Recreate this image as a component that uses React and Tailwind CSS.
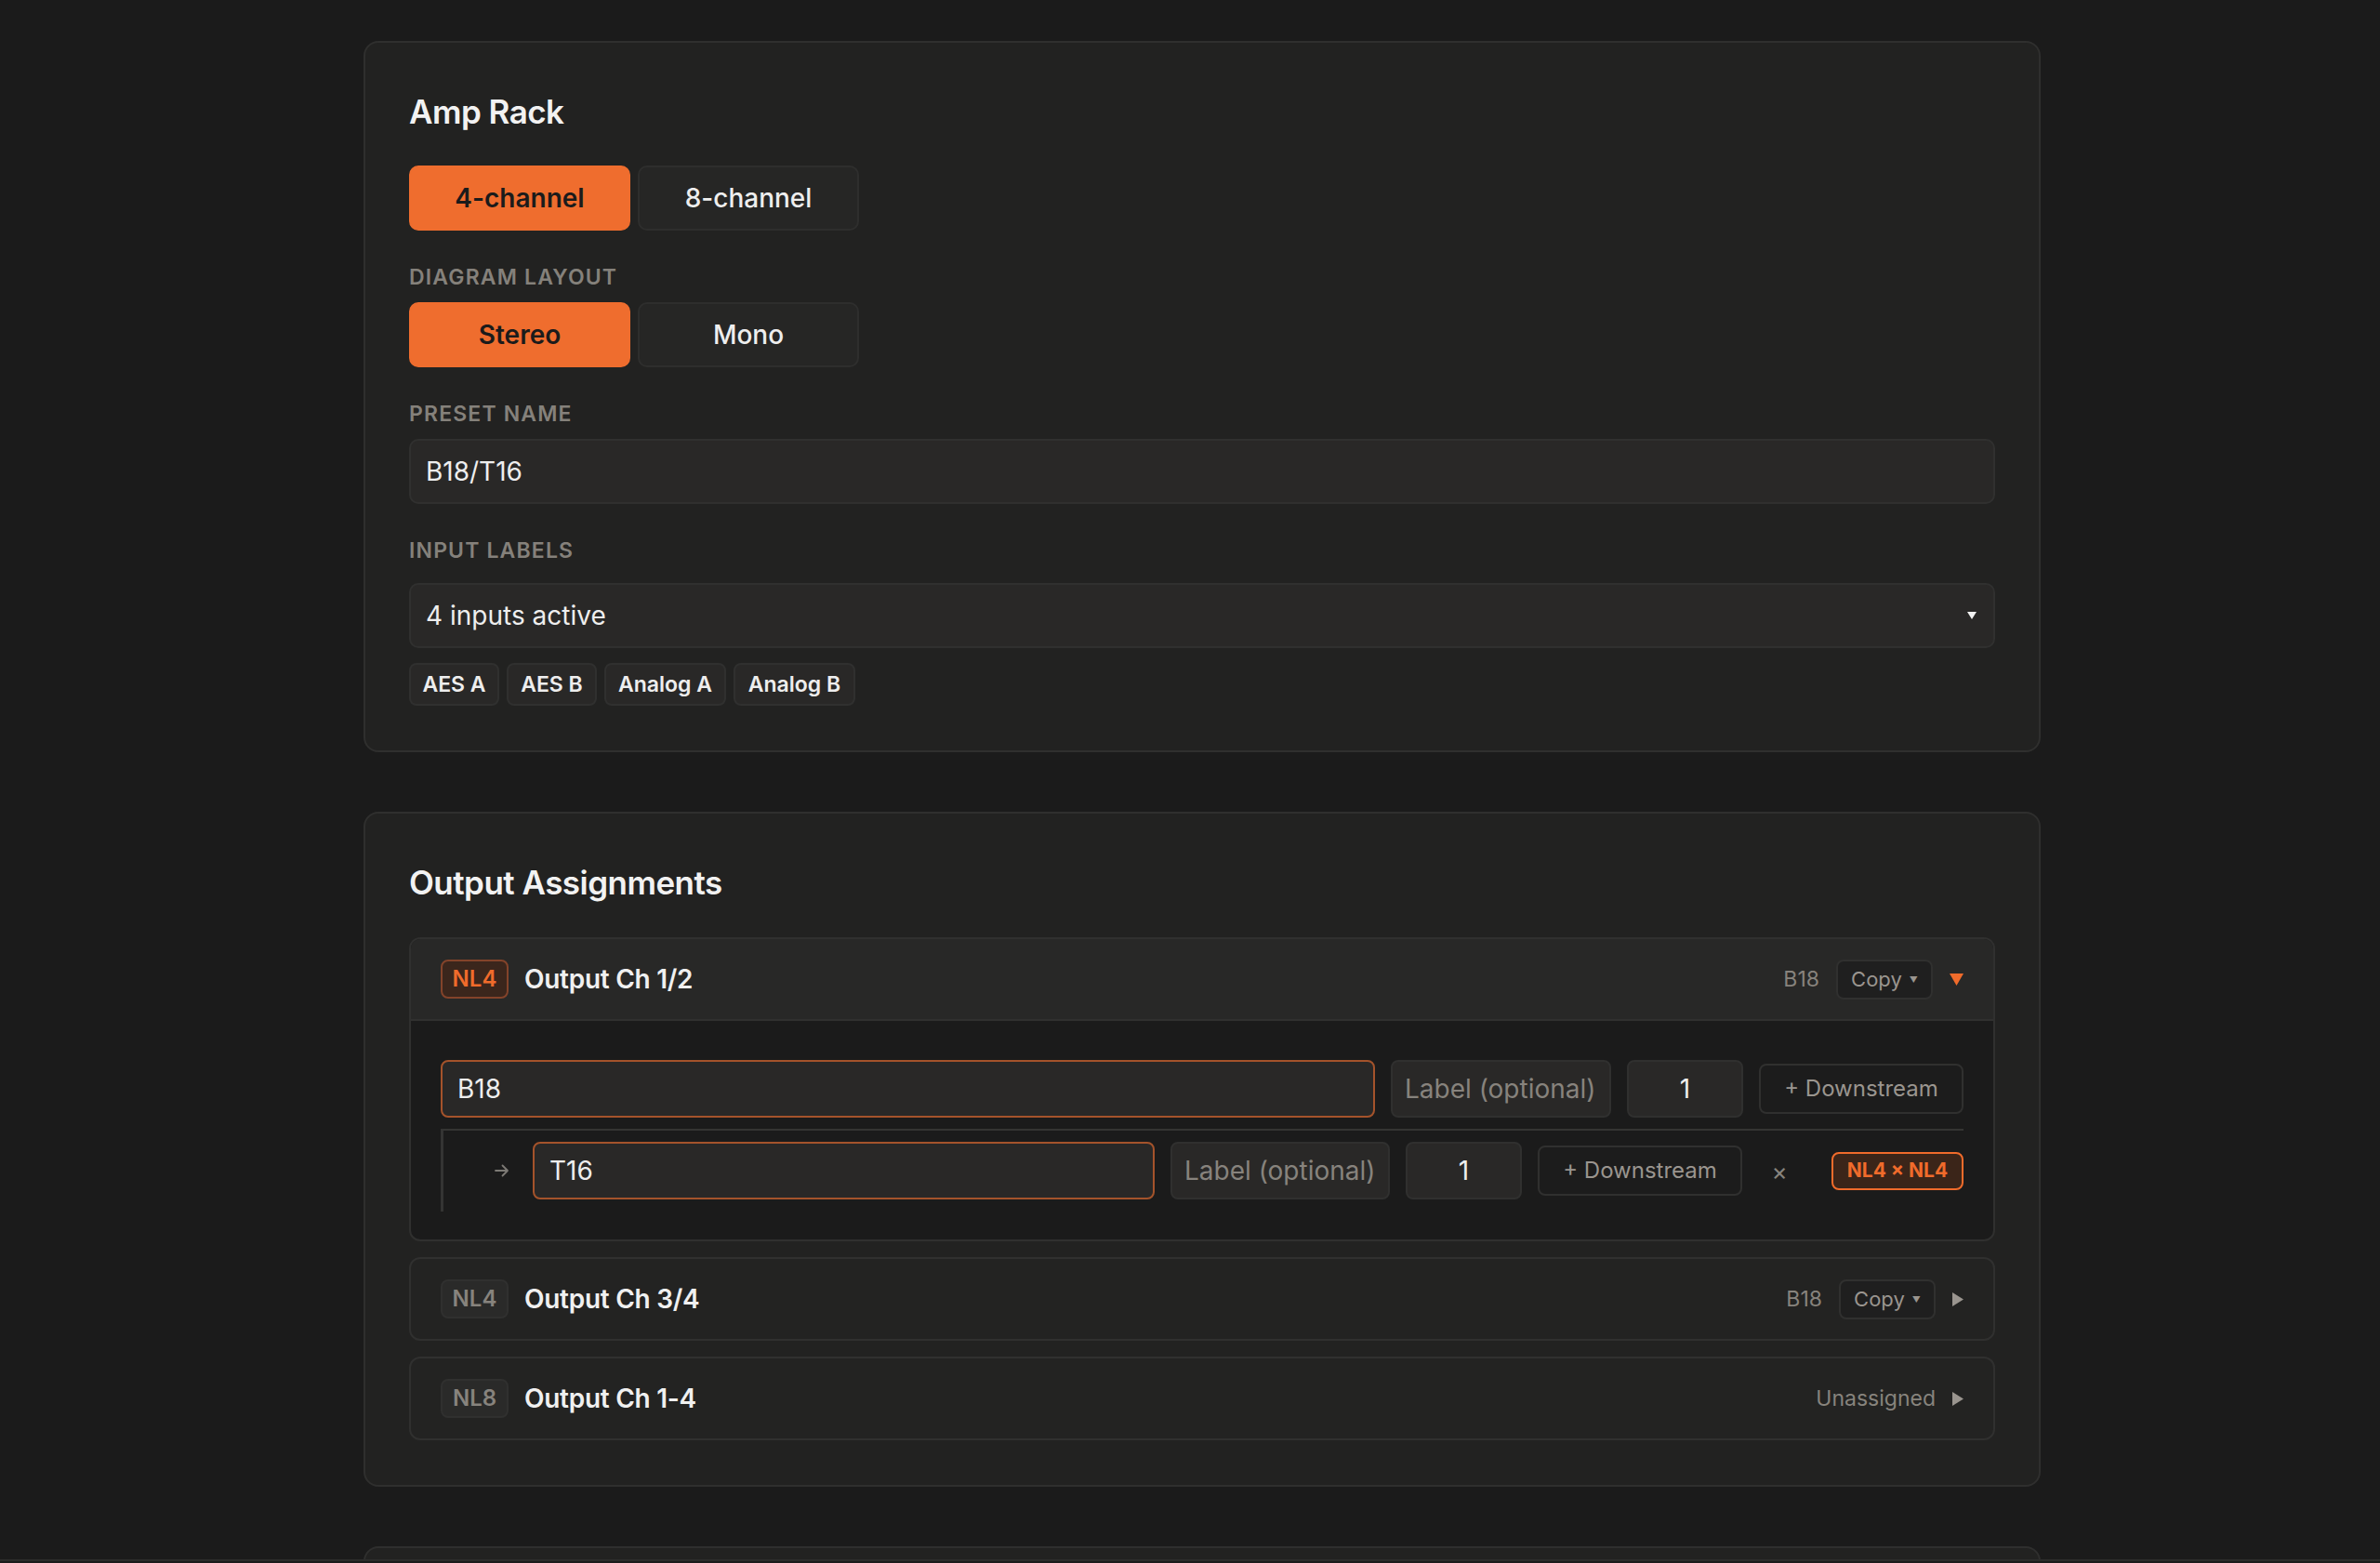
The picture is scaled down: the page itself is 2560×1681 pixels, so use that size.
import { useState } from 'react'

function SectionLabel({ children, className = '' }) {
  return (
    <div
      className={`h-[32px] text-[23px] leading-[32px] font-semibold uppercase tracking-[0.05em] text-[#85817b] ${className}`}
    >
      {children}
    </div>
  )
}

function Toggle({ options, value, onChange }) {
  return (
    <div className="flex gap-[8px]">
      {options.map((opt) => (
        <button
          key={opt}
          type="button"
          onClick={() => onChange(opt)}
          className={`h-[70px] w-[238px] rounded-[10px] border-2 text-[28px] ${
            value === opt
              ? 'border-[#ef6d2e] bg-[#ef6d2e] font-semibold text-[#1b1b1b]'
              : 'border-[#2e2e2d] bg-[#262625] font-medium text-[#eeeeee]'
          }`}
        >
          {opt}
        </button>
      ))}
    </div>
  )
}

function Caret({ open, color }) {
  return open ? (
    <svg width="15" height="13" viewBox="0 0 15 13">
      <polygon points="0,0 15,0 7.5,13" fill={color} />
    </svg>
  ) : (
    <svg width="12" height="15" viewBox="0 0 12 15">
      <polygon points="0,0 12,7.5 0,15" fill={color} />
    </svg>
  )
}

function Badge({ active, children }) {
  return (
    <span
      className={`flex h-[42px] w-[73px] items-center justify-center rounded-[8px] border-2 text-[24px] font-semibold ${
        active
          ? 'border-[#83432a] bg-[#3b261c] text-[#f06b2b]'
          : 'border-[#30302f] bg-[#2a2a29] text-[#87837d]'
      }`}
    >
      {children}
    </span>
  )
}

function CopyButton() {
  return (
    <button
      type="button"
      className="flex h-[43px] w-[104px] items-center justify-center gap-[8px] rounded-[8px] border-2 border-[#30302f] bg-[#1f1f1f] text-[22px] text-[#9a958f]"
    >
      Copy <span className="text-[9px] leading-none">▼</span>
    </button>
  )
}

function ChannelHeader({ badge, title, active, open, source, bordered }) {
  return (
    <div
      className={`flex items-center px-[32px] ${
        bordered ? 'h-[88px] border-b-2 border-[#30302f] bg-[#282827]' : 'h-[86px]'
      }`}
    >
      <div className="flex items-center gap-[17px]">
        <Badge active={active}>{badge}</Badge>
        <span className="text-[28px] font-semibold tracking-[-0.01em] text-[#f0f0f0]">{title}</span>
      </div>
      <div className="ml-auto flex items-center gap-[18px]">
        {source ? (
          <>
            <span className="text-[23px] text-[#87837d]">{source}</span>
            <CopyButton />
          </>
        ) : (
          <span className="text-[23px] text-[#87837d]">Unassigned</span>
        )}
        <Caret open={open} color={open ? '#f06b2b' : '#9a958f'} />
      </div>
    </div>
  )
}

const fieldBase =
  'h-[62px] rounded-[8px] border-2 bg-[#292827] text-[28px] text-[#eeeeee] outline-none'

function DownstreamButton() {
  return (
    <button
      type="button"
      className="h-[54px] w-[220px] shrink-0 rounded-[8px] border-2 border-[#30302f] bg-[#1c1c1c] text-[24px] text-[#9a958f]"
    >
      + Downstream
    </button>
  )
}

export default function App() {
  const [channels, setChannels] = useState('4-channel')
  const [layout, setLayout] = useState('Stereo')

  return (
    <div className="min-h-screen bg-[#1b1b1b] pb-[40px] pl-[391px] pt-[44px] font-['Inter','Noto_Sans',sans-serif]">
      <div className="flex w-[1804px] flex-col gap-[64px]">
        {/* Amp Rack */}
        <section className="rounded-[16px] border-2 border-[#2f2f2e] bg-[#222221] px-[47px] pb-[48px] pt-[52px]">
          <h2 className="h-[44px] text-[35px] leading-[44px] font-semibold tracking-[-0.015em] text-[#f2f2f2]">
            Amp Rack
          </h2>
          <div className="mt-[36px]">
            <Toggle options={['4-channel', '8-channel']} value={channels} onChange={setChannels} />
          </div>
          <SectionLabel className="mt-[34px]">Diagram Layout</SectionLabel>
          <div className="mt-[11px]">
            <Toggle options={['Stereo', 'Mono']} value={layout} onChange={setLayout} />
          </div>
          <SectionLabel className="mt-[34px]">Preset Name</SectionLabel>
          <input
            readOnly
            value="B18/T16"
            className="mt-[11px] block h-[70px] w-full rounded-[10px] border-2 border-[#30302f] bg-[#292827] px-[16px] text-[28px] text-[#eeeeee] outline-none"
          />
          <SectionLabel className="mt-[34px]">Input Labels</SectionLabel>
          <div className="mt-[19px] flex h-[70px] items-center rounded-[10px] border-2 border-[#30302f] bg-[#292827] pl-[16px] pr-[18px] text-[28px] text-[#eeeeee]">
            <span>4 inputs active</span>
            <svg className="ml-auto" width="10" height="8" viewBox="0 0 10 8">
              <polygon points="0,0 10,0 5,8" fill="#f2f2f2" />
            </svg>
          </div>
          <div className="mt-[16px] flex gap-[8px]">
            {['AES A', 'AES B', 'Analog A', 'Analog B'].map((t) => (
              <span
                key={t}
                className={`flex h-[46px] items-center justify-center rounded-[8px] border-2 border-[#30302f] bg-[#292827] text-[23px] font-semibold text-[#eeeeee] ${
                  t.startsWith('AES') ? 'w-[97px]' : 'w-[131px]'
                }`}
              >
                {t}
              </span>
            ))}
          </div>
        </section>

        {/* Output Assignments */}
        <section className="rounded-[16px] border-2 border-[#2f2f2e] bg-[#222221] px-[47px] pb-[48px] pt-[52px]">
          <h2 className="h-[44px] text-[35px] leading-[44px] font-semibold tracking-[-0.015em] text-[#f2f2f2]">
            Output Assignments
          </h2>
          <div className="mt-[37px] flex flex-col gap-[17px]">
            <div className="overflow-hidden rounded-[12px] border-2 border-[#30302f] bg-[#1b1b1b]">
              <ChannelHeader badge="NL4" title="Output Ch 1/2" active open source="B18" bordered />
              <div className="px-[32px] pb-[30px] pt-[42px]">
                <div className="flex items-center gap-[17px]">
                  <input readOnly value="B18" className={`${fieldBase} min-w-0 flex-1 border-[#a4532b] px-[16px]`} />
                  <input
                    readOnly
                    placeholder="Label (optional)"
                    className={`${fieldBase} w-[237px] border-[#30302f] px-[13px] placeholder:text-[#87837d]`}
                  />
                  <input readOnly value="1" className={`${fieldBase} w-[125px] border-[#30302f] text-center`} />
                  <DownstreamButton />
                </div>
                <div className="mt-[12px] flex items-center border-l-[3px] border-t-2 border-[#343433] pb-[13px] pl-[55px] pt-[12px]">
                  <svg width="16" height="14" viewBox="0 0 16 14" className="shrink-0">
                    <path d="M1 7h13M8.5 1.5 14 7l-5.5 5.5" fill="none" stroke="#7d7a75" strokeWidth="1.8" strokeLinecap="round" strokeLinejoin="round" />
                  </svg>
                  <input readOnly value="T16" className={`${fieldBase} ml-[25px] min-w-0 flex-1 border-[#a4532b] px-[16px]`} />
                  <input
                    readOnly
                    placeholder="Label (optional)"
                    className={`${fieldBase} ml-[17px] w-[236px] border-[#30302f] px-[13px] placeholder:text-[#87837d]`}
                  />
                  <input readOnly value="1" className={`${fieldBase} ml-[17px] w-[125px] border-[#30302f] text-center`} />
                  <div className="ml-[17px]">
                    <DownstreamButton />
                  </div>
                  <button type="button" className="ml-[16px] h-[48px] w-[48px] text-[26px] text-[#87837d]">
                    ×
                  </button>
                  <span className="ml-[32px] flex h-[41px] w-[142px] shrink-0 items-center justify-center rounded-[8px] border-2 border-[#f06b2b] bg-[#3b2519] text-[21px] font-bold text-[#f06b2b]">
                    NL4 × NL4
                  </span>
                </div>
              </div>
            </div>
            <div className="rounded-[12px] border-2 border-[#30302f] bg-[#232322]">
              <ChannelHeader badge="NL4" title="Output Ch 3/4" source="B18" />
            </div>
            <div className="rounded-[12px] border-2 border-[#30302f] bg-[#232322]">
              <ChannelHeader badge="NL8" title="Output Ch 1-4" />
            </div>
          </div>
        </section>

        <section className="h-[400px] rounded-[16px] border-2 border-[#2f2f2e] bg-[#222221]" />
      </div>
      <div className="fixed bottom-0 left-0 right-0 h-[4px] border-t-2 border-[#2c2c2b] bg-[#1b1b1b]" />
    </div>
  )
}
